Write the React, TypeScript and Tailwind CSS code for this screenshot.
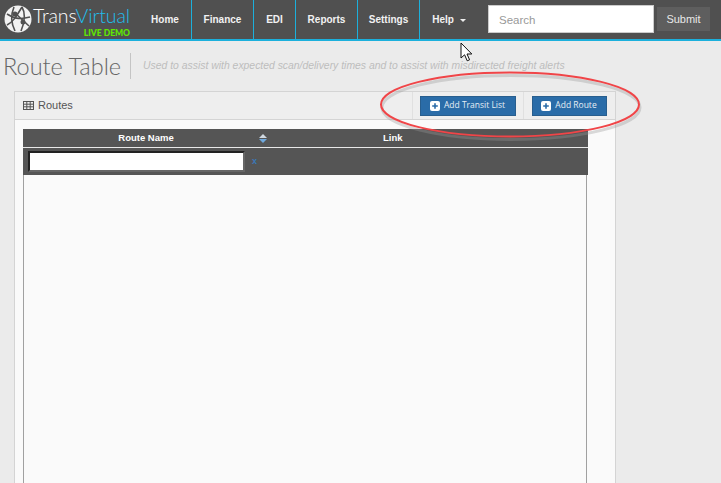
import React from "react";

const Nav = ({ label, width, caret }: { label: string; width: string; caret?: boolean }) => (
  <div className={`flex h-full items-center justify-center gap-[6px] border-r border-[#1cb0dc] last:border-r-0 ${width}`}>
    <span>{label}</span>
    {caret && <span className="mt-[2px] h-0 w-0 border-x-[3.5px] border-t-[3.5px] border-x-transparent border-t-[#eeeeee]" />}
  </div>
);

const AddButton = ({ label, width }: { label: string; width: string }) => (
  <div className={`flex h-[20px] items-center justify-center gap-[4px] border border-[#285e8e] bg-[#2a6ca8] font-['Open_Sans',sans-serif] text-[8.5px] text-[#e6eef5] ${width}`}>
    <svg width="10" height="10" viewBox="0 0 10 10" className="-ml-[1px]">
      <rect width="10" height="10" rx="2" fill="#ffffff" />
      <path d="M5 2.2v5.6M2.2 5h5.6" stroke="#2a6ca8" strokeWidth="1.6" />
    </svg>
    <span>{label}</span>
  </div>
);

export default function App() {
  return (
    <div className="relative h-[483px] w-[721px] overflow-hidden bg-[#ebebeb] font-['Liberation_Sans',sans-serif]">
      <header className="flex h-[41px] items-stretch border-b-2 border-[#1cb0dc] bg-[#505050]">
        <div className="flex w-[139px] shrink-0 items-center pl-[4px]">
          <svg width="28" height="28" viewBox="0 0 28 28" className="mb-[1px] shrink-0">
            <circle cx="14" cy="14" r="13.5" fill="#f2f2f2" />
            <g stroke="#505050" strokeWidth="1.6" fill="none">
              <path d="M3 9c6 4 12 6 23 3" />
              <path d="M10 2c-3 7-3 16 1 24" />
              <path d="M18 2c3 5 4 12-1 24" />
              <path d="M3 20c6-3 9-8 15-18" />
              <path d="M11 8l14 13" />
            </g>
            <circle cx="11" cy="9" r="2.5" fill="#505050" />
            <circle cx="19" cy="17" r="2.5" fill="#505050" />
          </svg>
          <div className="ml-[4px] flex w-[94px] shrink-0 flex-col items-end pt-[4px]">
            <div className="font-['Lato',sans-serif] text-[19.5px] leading-[20px] font-light tracking-[-0.1px] whitespace-nowrap text-white">
              Trans<span className="text-[#1fbdec]">Virtual</span>
            </div>
            <div className="mt-[3px] font-['Lato',sans-serif] text-[8.5px] leading-[9px] font-black text-[#5fe800]">LIVE DEMO</div>
          </div>
        </div>
        <nav className="flex items-center text-[10px] font-bold text-[#f2f2f2]">
          <Nav label="Home" width="w-[53px]" />
          <Nav label="Finance" width="w-[62px]" />
          <Nav label="EDI" width="w-[42px]" />
          <Nav label="Reports" width="w-[62px]" />
          <Nav label="Settings" width="w-[62px]" />
          <Nav label="Help" width="w-[58px]" caret />
        </nav>
        <div className="ml-auto flex items-center gap-[3px] pr-[11px] pb-[1px]">
          <div className="flex h-[28px] w-[166px] items-center border border-[#cccccc] bg-white pt-[3px] pl-[10px] text-[11.5px] text-[#999999]">Search</div>
          <div className="flex h-[24px] w-[53px] items-center justify-center bg-[#5e5e5e] text-[11px] text-[#e8e8e8]">Submit</div>
        </div>
      </header>

      <div className="flex h-[50px] items-center pl-[3px]">
        <h1 className="border-r border-[#c4c4c4] pr-[9px] font-['Lato',sans-serif] text-[23.5px] leading-[26px] font-light text-[#666666]">Route Table</h1>
        <p className="ml-[12px] text-[10.4px] text-[#bdbdbd] italic">Used to assist with expected scan/delivery times and to assist with misdirected freight alerts</p>
      </div>

      <section className="ml-[14px] h-[392px] w-[602px] border-x border-t border-[#d4d4d4] bg-[#fafafa]">
        <div className="flex h-[28px] items-stretch justify-between border-b border-[#d4d4d4] bg-[#eeeeee]">
          <div className="flex items-center gap-[4px] pl-[8px] text-[11px] text-[#555555]">
            <svg width="11" height="9" viewBox="0 0 11 9" fill="none" stroke="#555555" strokeWidth="1">
              <rect x=".5" y=".5" width="10" height="8" />
              <path d="M.5 3.2h10M.5 5.8h10M3.8.5v8M7.2.5v8" />
            </svg>
            Routes
          </div>
          <div className="mr-[8px] flex items-center">
            <div className="flex h-full items-center border-l border-[#e0e0e0] px-[7px]">
              <AddButton label="Add Transit List" width="w-[96px]" />
            </div>
            <div className="flex h-full items-center border-l border-[#e0e0e0] pl-[8px]">
              <AddButton label="Add Route" width="w-[75px]" />
            </div>
          </div>
        </div>

        <div className="mt-[9px] ml-[8px] h-[360px] w-[564px] border-x border-[#a0a0a0]">
          <div className="-ml-px flex h-[19px] w-[565px] items-center border-b border-[#e8e8e8] bg-[#555555] text-[9.5px] font-bold text-white">
            <div className="flex w-[232px] justify-center pl-[14px]">Route Name</div>
            <div className="flex h-[10px] w-[16px] flex-col items-center justify-center gap-[1px]">
              <span className="h-0 w-0 border-x-[4px] border-b-[4px] border-x-transparent border-b-[#d0d8e0]" />
              <span className="h-0 w-0 border-x-[4px] border-t-[4px] border-x-transparent border-t-[#6fa8dc]" />
            </div>
            <div className="pl-[112px]">Link</div>
          </div>
          <div className="-ml-px flex h-[27px] w-[565px] items-center bg-[#555555] pl-[5px]">
            <div className="h-[21px] w-[217px] border-2 border-t-[#222222] border-r-[#666666] border-b-[#666666] border-l-[#222222] bg-white" />
            <span className="ml-[7px] text-[9px] font-bold text-[#3b78b8]">x</span>
          </div>
        </div>
      </section>

      <svg className="pointer-events-none absolute top-[68px] left-[375px]" width="272" height="76" viewBox="0 0 272 76" fill="none">
        <ellipse cx="136" cy="39.5" rx="129" ry="32" stroke="#999999" strokeOpacity="0.35" strokeWidth="3" />
        <ellipse cx="135" cy="36.5" rx="129" ry="32" stroke="#f04548" strokeWidth="2" />
      </svg>

      <svg className="absolute top-[42px] left-[460px]" width="13" height="21" viewBox="0 0 13 21">
        <path d="M1 1v15l3.6-3.2 2.6 6 2.4-1-2.6-5.8h4.8z" fill="#ffffff" stroke="#111111" strokeWidth="1" />
      </svg>
    </div>
  );
}
